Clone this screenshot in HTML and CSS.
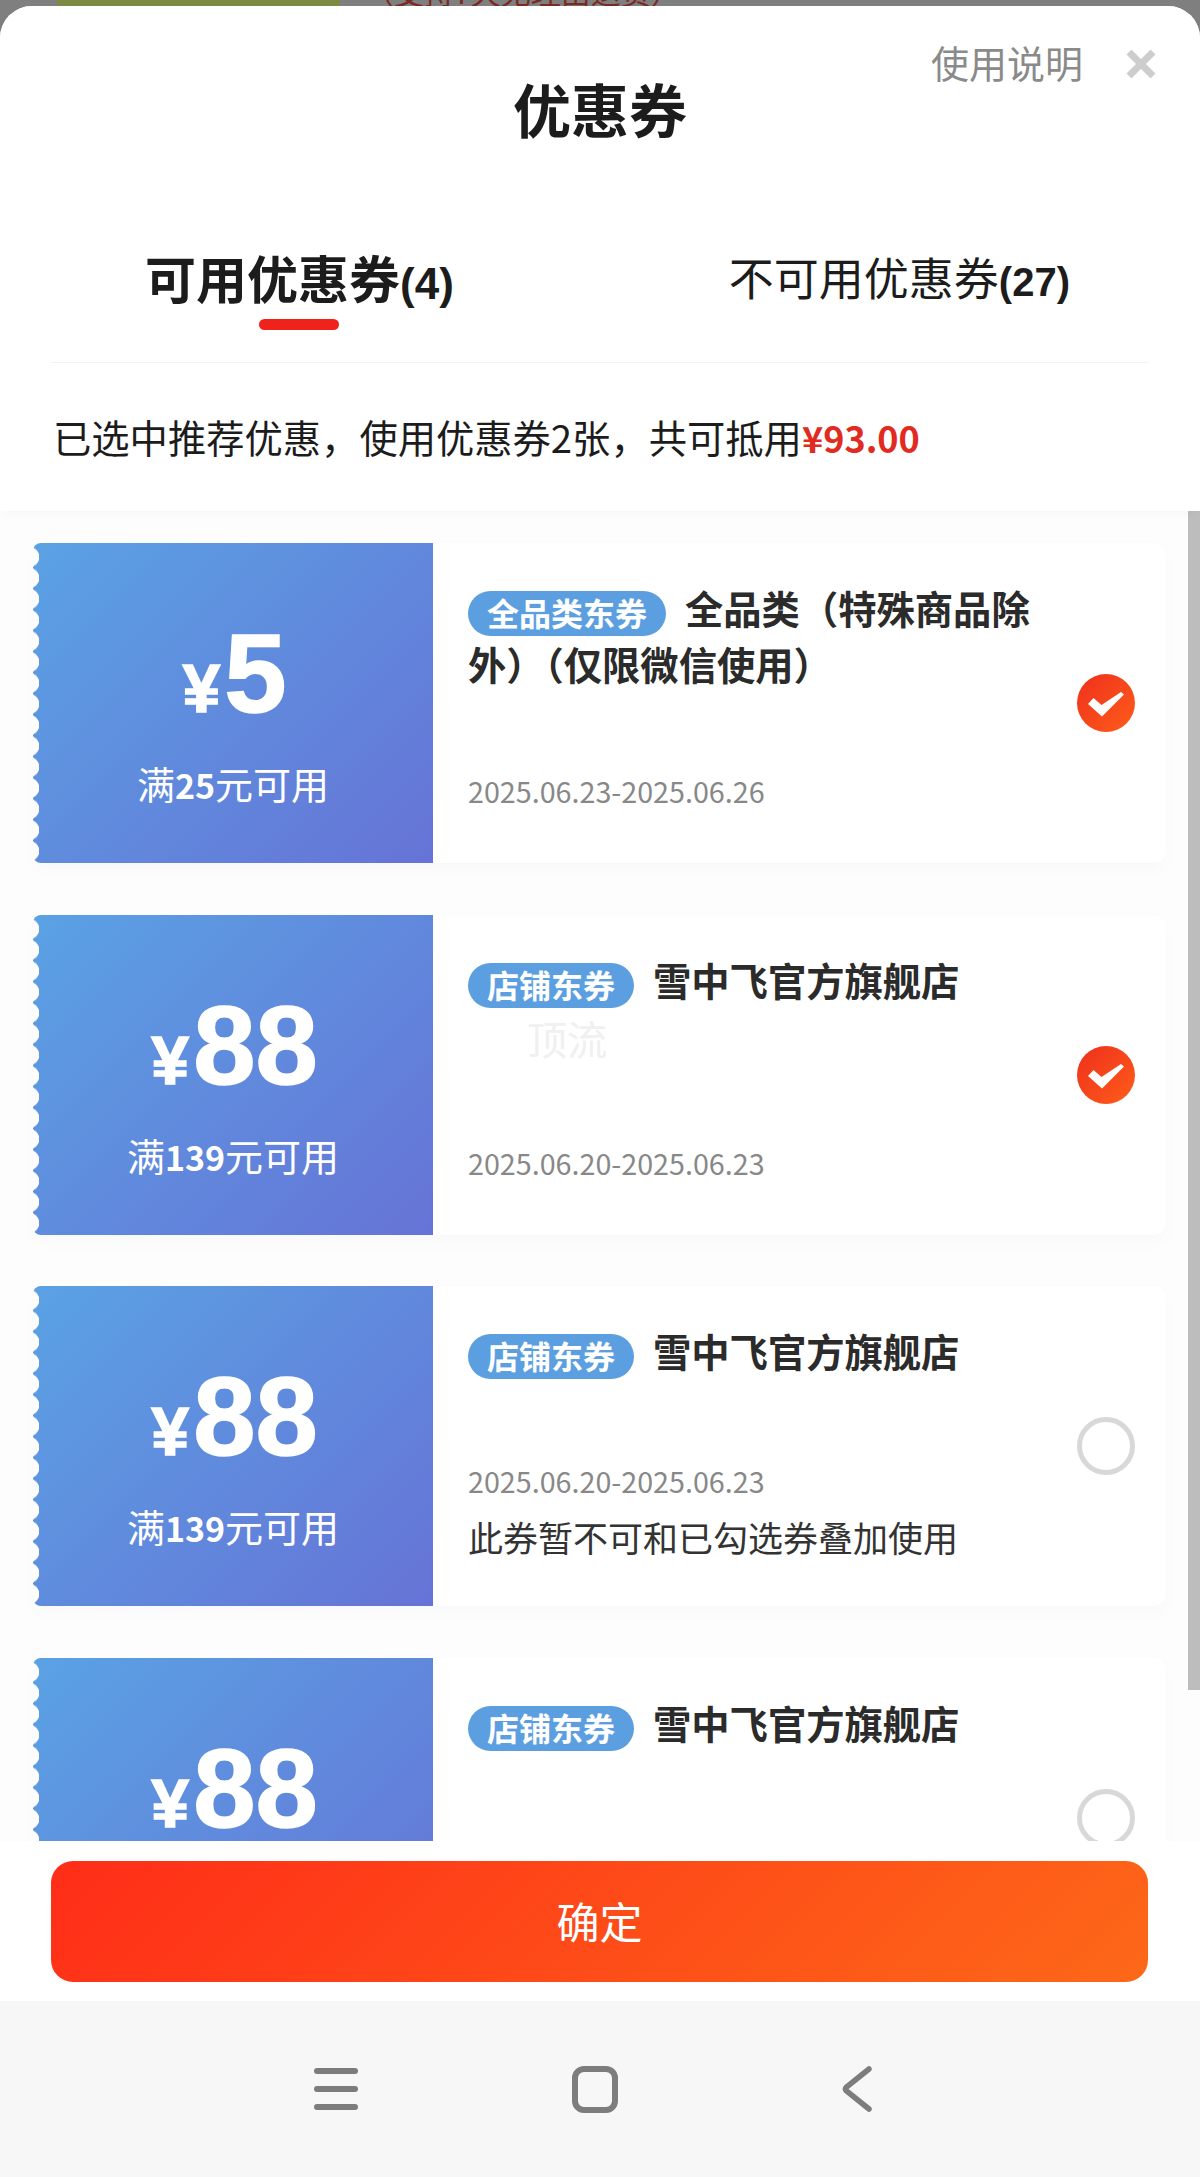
FILE: index.html
```html
<!DOCTYPE html>
<html lang="zh-CN">
<head>
    <meta charset="UTF-8">
    <meta name="viewport" content="width=device-width, initial-scale=1.0">
    <title>优惠券</title>
    <link rel="stylesheet" href="styles.css">
</head>
<body>
    <div class="backdrop">
        <div class="backdrop-thumb"></div>
        <div class="backdrop-text">（支持7天无理由退货）</div>
    </div>

    <div class="sheet">
        <div class="sheet-head">
            <div class="title-row">
                <div class="title">优惠券</div>
                <div class="actions">
                    <span class="help">使用说明</span>
                    <svg class="close" viewBox="0 0 32 28"><path d="M4 2 L28 26 M28 2 L4 26"/></svg>
                </div>
            </div>
            <div class="tabs">
                <div class="tab tab-active">
                    <span>可用优惠券<b class="tab-count">(4)</b></span>
                    <i class="tab-line"></i>
                </div>
                <div class="tab">
                    <span>不可用优惠券<b class="tab-count">(27)</b></span>
                </div>
            </div>
            <div class="summary">已选中推荐优惠，使用优惠券2张，共可抵用<b class="summary-money">¥93.00</b></div>
        </div>

        <div class="list">
            <div class="coupon">
                <div class="coupon-left">
                    <div class="amount"><span class="yen">¥</span><span class="num">5</span></div>
                    <div class="limit">满<b>25</b>元可用</div>
                </div>
                <div class="coupon-body">
                    <div class="coupon-info">
                        <div class="coupon-name"><span class="tag">全品类东券</span>全品类（特殊商品除外）（仅限微信使用）</div>
                        <div class="date">2025.06.23-2025.06.26</div>
                    </div>
                    <div class="check check-on">
                        <svg viewBox="0 0 58 58"><path d="M11 30 L16.5 24 L24.5 31 L44 18 L47 20.5 L25 42.5 Z"/></svg>
                    </div>
                </div>
            </div>

            <div class="coupon">
                <div class="coupon-left">
                    <div class="amount"><span class="yen">¥</span><span class="num">88</span></div>
                    <div class="limit">满<b>139</b>元可用</div>
                </div>
                <div class="coupon-body">
                    <div class="watermark">顶流</div>
                    <div class="coupon-info">
                        <div class="coupon-name"><span class="tag">店铺东券</span>雪中飞官方旗舰店</div>
                        <div class="date">2025.06.20-2025.06.23</div>
                    </div>
                    <div class="check check-on">
                        <svg viewBox="0 0 58 58"><path d="M11 30 L16.5 24 L24.5 31 L44 18 L47 20.5 L25 42.5 Z"/></svg>
                    </div>
                </div>
            </div>

            <div class="coupon">
                <div class="coupon-left">
                    <div class="amount"><span class="yen">¥</span><span class="num">88</span></div>
                    <div class="limit">满<b>139</b>元可用</div>
                </div>
                <div class="coupon-body has-note">
                    <div class="coupon-info">
                        <div class="coupon-name"><span class="tag">店铺东券</span>雪中飞官方旗舰店</div>
                        <div class="date">2025.06.20-2025.06.23</div>
                        <div class="note">此券暂不可和已勾选券叠加使用</div>
                    </div>
                    <div class="check"></div>
                </div>
            </div>

            <div class="coupon">
                <div class="coupon-left">
                    <div class="amount"><span class="yen">¥</span><span class="num">88</span></div>
                </div>
                <div class="coupon-body">
                    <div class="coupon-info">
                        <div class="coupon-name"><span class="tag">店铺东券</span>雪中飞官方旗舰店</div>
                    </div>
                    <div class="check"></div>
                </div>
            </div>

            <div class="scrollbar"></div>
        </div>

        <div class="footer">
            <button class="confirm">确定</button>
        </div>
    </div>

    <div class="navbar">
        <svg class="nav-menu" viewBox="0 0 44 42"><path d="M3 3 H41 M3 21 H41 M3 39 H41"/></svg>
        <svg class="nav-home" viewBox="0 0 46 47"><rect x="3" y="3" width="40" height="41" rx="9"/></svg>
        <svg class="nav-back" viewBox="0 0 30 46"><path d="M27 3 L4.5 21 Q2.5 23 4.5 25 L27 43"/></svg>
    </div>
</body>
</html>
```

FILE: styles.css
```css
* {
    box-sizing: border-box;
}
body {
    display: flex;
    flex-direction: column;
    width: 1200px;
    height: 2177px;
    margin: 0;
    overflow: hidden;
    font-family: "Noto Sans CJK SC", "Liberation Sans", sans-serif;
    background-color: #7f7f7f;
    color: #1c1c1c;
}
.backdrop {
    display: flex;
    align-items: flex-end;
    height: 6px;
    overflow: hidden;
    padding-left: 57px;
}
.backdrop-thumb {
    width: 283px;
    height: 6px;
    background-color: #7d8a42;
}
.backdrop-text {
    margin-left: 24px;
    font-size: 30px;
    line-height: 30px;
    height: 30px;
    flex-shrink: 0;
    color: #7a2a22;
}
.sheet {
    display: flex;
    flex-direction: column;
    height: 1995px;
    overflow: hidden;
    border-radius: 32px 32px 0 0;
    background-color: #fff;
}
.sheet-head {
    position: relative;
    z-index: 2;
    background-color: #fff;
    box-shadow: 0 2px 10px rgba(0, 0, 0, 0.03);
}
.title-row {
    display: grid;
    grid-template-columns: 1fr auto 1fr;
    padding: 0 43px;
}
.title {
    grid-column: 2;
    margin-top: 64px;
    font-size: 58px;
    line-height: 76px;
    font-weight: bold;
}
.actions {
    grid-column: 3;
    display: flex;
    align-items: center;
    justify-content: flex-end;
    gap: 42px;
    height: 52px;
    margin-top: 32px;
}
.help {
    margin-bottom: 6px;
    font-size: 38px;
    color: #8a8a8a;
}
.close {
    width: 32px;
    height: 28px;
    fill: none;
    stroke: #cdcdcd;
    stroke-width: 7;
}
.tabs {
    display: flex;
    align-items: flex-start;
    height: 217px;
    margin: 0 52px 0 51px;
    padding-top: 101px;
    padding-left: 94px;
    border-bottom: 1px solid #f3f3f3;
}
.tab {
    font-size: 45px;
    line-height: 60px;
    margin-left: 275px;
}
.tab-active {
    display: flex;
    flex-direction: column;
    align-items: center;
    margin-left: 0;
    font-size: 51px;
    font-weight: bold;
}
.tab-count {
    font-family: "Liberation Sans", sans-serif;
    font-size: 40px;
    line-height: 1;
}
.tab-active .tab-count {
    font-size: 44px;
}
.tab-line {
    width: 80px;
    height: 11px;
    margin-top: 12px;
    border-radius: 6px;
    background-color: #f0231c;
}
.summary {
    height: 148px;
    padding: 49px 51px 0 53px;
    font-size: 38.3px;
    line-height: 50px;
}
.summary-money {
    color: #e12a20;
    font-size: 36px;
}
.list {
    position: relative;
    flex: 1;
    overflow: hidden;
    padding: 32px 34px 0 33px;
    background-color: #fdfdfd;
}
.scrollbar {
    position: absolute;
    top: 0;
    right: 0;
    width: 12px;
    height: 1179px;
    background-color: #bdbdbd;
}
.coupon {
    display: flex;
    height: 320px;
    margin-bottom: 51.5px;
    border-radius: 10px;
    background-color: #fff;
    box-shadow: 0 10px 16px rgba(0, 0, 0, 0.015), 0 0 1px rgba(0, 0, 0, 0.06);
}
.coupon-left {
    position: relative;
    display: flex;
    flex-direction: column;
    align-items: center;
    width: 400px;
    flex-shrink: 0;
    border-radius: 8px 0 0 8px;
    color: #fff;
    background: linear-gradient(135deg, #5aa2e4, #6673d6);
}
.coupon-left::before {
    content: "";
    position: absolute;
    left: 0;
    top: 0;
    bottom: 0;
    width: 8px;
    background: radial-gradient(circle at -4px 10.5px, #fdfdfd 10px, transparent 10.5px) 0 3.5px / 8px 21px repeat-y;
}
.amount {
    display: flex;
    align-items: baseline;
    margin-top: 66px;
    padding-left: 3px;
    height: 130px;
    font-family: "Liberation Sans", sans-serif;
    font-weight: bold;
    line-height: 130px;
    -webkit-text-stroke: 1.5px #fff;
}
.yen {
    font-size: 68px;
    margin-right: 4px;
}
.num {
    font-size: 112px;
}
.limit {
    margin-top: 19px;
    font-size: 38px;
    line-height: 50px;
}
.limit b {
    font-size: 34px;
}
.coupon-body {
    position: relative;
    flex: 1;
    display: flex;
    align-items: center;
    padding: 0 31px 0 35px;
}
.coupon-info {
    display: flex;
    flex-direction: column;
    align-self: stretch;
    width: 590px;
    padding: 37px 0 52px;
}
.has-note .coupon-info {
    padding-bottom: 49px;
}
.coupon-name {
    font-size: 38.3px;
    line-height: 55px;
    font-weight: bold;
    color: #2b2b2b;
}
.tag {
    display: inline-block;
    height: 45px;
    margin-top: 11px;
    margin-right: 19px;
    padding: 0 19px;
    border-radius: 23px;
    font-size: 32px;
    line-height: 43px;
    vertical-align: top;
    color: #fff;
    background-color: #5c9fe0;
}
.date {
    margin-top: auto;
    font-size: 28.7px;
    line-height: 40px;
    color: #888;
}
.note {
    margin-top: 16px;
    font-size: 35px;
    line-height: 40px;
    color: #333;
}
.watermark {
    position: absolute;
    left: 94px;
    top: 98px;
    font-size: 40px;
    line-height: 50px;
    color: #f0f0f0;
}
.check {
    width: 58px;
    height: 58px;
    margin-left: auto;
    flex-shrink: 0;
    border: 5px solid #d8d8d8;
    border-radius: 50%;
}
.check-on {
    border: 0;
    background: linear-gradient(135deg, #ee301c, #ff5c1a);
}
.check-on svg {
    display: block;
    fill: #fff;
}
.footer {
    position: relative;
    z-index: 2;
    flex-shrink: 0;
    height: 160px;
    padding: 20px 52px 0 51px;
    background-color: #fff;
}
.confirm {
    display: block;
    width: 100%;
    height: 121px;
    padding: 0 0 4px;
    border: 0;
    border-radius: 22px;
    font-family: inherit;
    font-size: 43px;
    color: #fff;
    background: linear-gradient(135deg, #ff2d18, #fd6818);
}
.navbar {
    display: flex;
    align-items: center;
    height: 176px;
    padding: 0 0 0 314px;
    background-color: #f7f7f7;
}
.navbar svg {
    fill: none;
    stroke: #7d7d7d;
    stroke-linecap: round;
}
.nav-menu {
    width: 44px;
    height: 42px;
    stroke-width: 6;
}
.nav-home {
    width: 46px;
    height: 47px;
    margin-left: 214px;
    stroke-width: 6;
}
.nav-back {
    width: 30px;
    height: 46px;
    margin-left: 224px;
    stroke-width: 5.5;
}
```
